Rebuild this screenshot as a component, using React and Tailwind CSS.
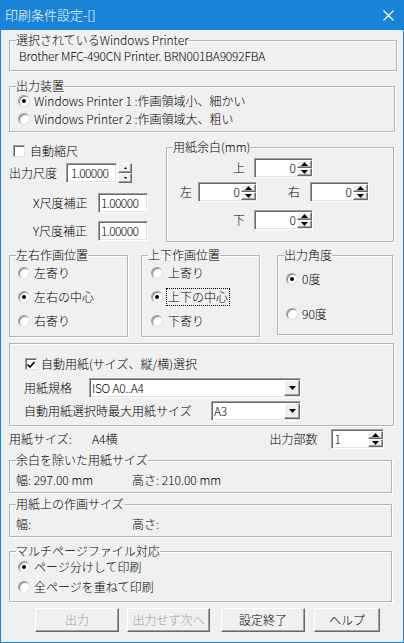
import React from 'react';

const sunken =
  'bg-white border border-t-[#a0a0a0] border-l-[#a0a0a0] border-b-white border-r-white shadow-[inset_1px_1px_0_#696969,inset_-1px_-1px_0_#e3e3e3]';
const raised =
  'bg-[#f0f0f0] border border-t-white border-l-white border-b-[#696969] border-r-[#696969] shadow-[inset_-1px_-1px_0_#a0a0a0]';

function Radio({ checked }) {
  return (
    <span className="w-[12px] h-[12px] shrink-0 rounded-full bg-white border border-[#a0a0a0] border-b-[#e3e3e3] border-r-[#e3e3e3] shadow-[inset_1px_1px_0_#8a8a8a] flex items-center justify-center">
      {checked && <span className="w-[4px] h-[4px] rounded-full bg-black" />}
    </span>
  );
}

function Check({ checked }) {
  return (
    <span className="w-[12px] h-[12px] shrink-0 bg-white border border-[#a0a0a0] border-b-[#e3e3e3] border-r-[#e3e3e3] shadow-[inset_1px_1px_0_#696969] flex items-center justify-center">
      {checked && (
        <svg width="8" height="7" viewBox="0 0 8 7">
          <path d="M0.5 3.5 L3 6 L7.5 1" fill="none" stroke="#000" strokeWidth="1.6" />
        </svg>
      )}
    </span>
  );
}

function Tri({ down }) {
  return (
    <svg width="7" height="4" viewBox="0 0 7 4">
      {down ? <path d="M0 0 H7 L3.5 4 Z" fill="#000" /> : <path d="M0 4 H7 L3.5 0 Z" fill="#000" />}
    </svg>
  );
}

// up/down buttons that sit inside a field
function MiniSpin() {
  return (
    <div className="flex flex-col w-[15px] h-[16px] shrink-0">
      <div className={`${raised} h-[8px] flex items-center justify-center`}>
        <Tri />
      </div>
      <div className={`${raised} h-[8px] flex items-center justify-center`}>
        <Tri down />
      </div>
    </div>
  );
}

function NumField({ value, className }) {
  return (
    <div className={`${sunken} h-[20px] flex items-center justify-end pl-[2px] ${className}`}>
      <span className="leading-[14px] pr-[1px]">{value}</span>
      <MiniSpin />
    </div>
  );
}

function Combo({ value, className }) {
  return (
    <div className={`${sunken} h-[20px] flex items-center ${className}`}>
      <span className="flex-1 pl-[2px] leading-[14px] tracking-[-0.3px]">{value}</span>
      <div className={`${raised} w-[16px] h-[16px] flex items-center justify-center`}>
        <Tri down />
      </div>
    </div>
  );
}

function Group({ title, className, children }) {
  return (
    <fieldset className={`border border-[#b4b4b4] shadow-[inset_1px_1px_0_#fff,1px_1px_0_#fff] ${className}`}>
      {title && <legend className="ml-[6px] leading-[14px]">{title}</legend>}
      {children}
    </fieldset>
  );
}

function Btn({ children, disabled, className }) {
  return (
    <button
      className={`${raised} h-[24px] flex items-center justify-center ${disabled ? 'text-[#a0a0a0]' : 'text-black'} ${className}`}
    >
      {children}
    </button>
  );
}

export default function App() {
  return (
    <div className="w-[404px] h-[643px] flex flex-col bg-[#f0f0f0] border-x border-b border-[#1883d7] text-[12px] font-light text-black font-['Noto_Sans_CJK_JP','Noto_Sans',sans-serif] overflow-hidden">
      {/* タイトルバー */}
      <div className="h-[30px] shrink-0 bg-[#1883d7] flex items-center justify-between pl-[4px] pr-[9px]">
        <span className="text-white text-[13px] leading-[16px]">印刷条件設定-[]</span>
        <svg width="11" height="11" viewBox="0 0 11 11">
          <path d="M0.5 0.5 L10.5 10.5 M10.5 0.5 L0.5 10.5" stroke="#fff" strokeWidth="1.1" />
        </svg>
      </div>

      <div className="flex flex-col pl-[8px]">
        {/* 選択プリンタ */}
        <Group title="選択されているWindows Printer" className="mt-[3px] w-[388px] h-[38px]">
          <div className="pl-[9px] pt-[2px] leading-[14px] tracking-[-0.2px]">Brother MFC-490CN Printer. BRN001BA9092FBA</div>
        </Group>

        {/* 出力装置 */}
        <Group title="出力装置" className="mt-[8px] w-[386px] h-[53px]">
          <div className="flex flex-col gap-[4px] pl-[8px] pt-[1px]">
            <div className="h-[14px] flex items-center gap-[4px]">
              <Radio checked />
              <span className="leading-[14px]">Windows Printer 1 :作画領域小、細かい</span>
            </div>
            <div className="h-[14px] flex items-center gap-[4px]">
              <Radio />
              <span className="leading-[14px]">Windows Printer 2 :作画領域大、粗い</span>
            </div>
          </div>
        </Group>

        {/* 尺度と余白 */}
        <div className="mt-[8px] flex items-start">
          <div className="w-[157px] flex flex-col">
            <div className="mt-[4px] h-[14px] flex items-center gap-[5px] pl-[4px]">
              <Check />
              <span className="leading-[14px]">自動縮尺</span>
            </div>
            <div className="mt-[5px] h-[20px] flex items-center">
              <span className="w-[57px] leading-[14px]">出力尺度</span>
              <div className={`${sunken} w-[51px] h-[20px] flex items-center pl-[4px] tracking-[-0.6px]`}>1.00000</div>
              <div className="ml-[1px] flex flex-col w-[14px] h-[20px]">
                <div className={`${raised} h-[10px] flex items-center justify-center`}>
                  <svg width="3" height="2" viewBox="0 0 3 2"><path d="M0 2 H3 L1.5 0 Z" fill="#000" /></svg>
                </div>
                <div className={`${raised} h-[10px] flex items-center justify-center`}>
                  <svg width="3" height="2" viewBox="0 0 3 2"><path d="M0 0 H3 L1.5 2 Z" fill="#000" /></svg>
                </div>
              </div>
            </div>
            <div className="mt-[10px] h-[20px] flex items-center pl-[24px]">
              <span className="w-[65px] leading-[14px]">X尺度補正</span>
              <div className={`${sunken} w-[50px] h-[20px] flex items-center pl-[2px] tracking-[-0.6px]`}>1.00000</div>
            </div>
            <div className="mt-[8px] h-[20px] flex items-center pl-[24px]">
              <span className="w-[65px] leading-[14px]">Y尺度補正</span>
              <div className={`${sunken} w-[50px] h-[20px] flex items-center pl-[2px] tracking-[-0.6px]`}>1.00000</div>
            </div>
          </div>

          <Group title="用紙余白(mm)" className="w-[228px] h-[102px]">
            <div className="flex flex-col">
              <div className="mt-[4px] h-[20px] flex items-center pl-[66px]">
                <span className="w-[21px] leading-[14px]">上</span>
                <NumField value="0" className="w-[59px]" />
              </div>
              <div className="mt-[4px] h-[20px] flex items-center pl-[13px]">
                <span className="w-[18px] leading-[14px]">左</span>
                <NumField value="0" className="w-[59px]" />
                <span className="ml-[31px] w-[22px] leading-[14px]">右</span>
                <NumField value="0" className="w-[59px]" />
              </div>
              <div className="mt-[8px] h-[20px] flex items-center pl-[66px]">
                <span className="w-[21px] leading-[14px]">下</span>
                <NumField value="0" className="w-[59px]" />
              </div>
            </div>
          </Group>
        </div>

        {/* 作画位置・出力角度 */}
        <div className="mt-[6px] flex items-start">
          <Group title="左右作画位置" className="w-[119px] h-[89px]">
            <div className="flex flex-col gap-[10px] mt-[4px] pl-[8px]">
              <div className="h-[14px] flex items-center gap-[4px]"><Radio /><span className="leading-[14px]">左寄り</span></div>
              <div className="h-[14px] flex items-center gap-[4px]"><Radio checked /><span className="leading-[14px]">左右の中心</span></div>
              <div className="h-[14px] flex items-center gap-[4px]"><Radio /><span className="leading-[14px]">右寄り</span></div>
            </div>
          </Group>
          <Group title="上下作画位置" className="ml-[13px] w-[119px] h-[89px]">
            <div className="flex flex-col gap-[10px] mt-[4px] pl-[9px]">
              <div className="h-[14px] flex items-center gap-[4px]"><Radio /><span className="leading-[14px] px-[1px]">上寄り</span></div>
              <div className="h-[14px] flex items-center gap-[3px]">
                <Radio checked />
                <span className="leading-[16px] px-[1px] border border-dotted border-black">上下の中心</span>
              </div>
              <div className="h-[14px] flex items-center gap-[4px]"><Radio /><span className="leading-[14px] px-[1px]">下寄り</span></div>
            </div>
          </Group>
          <Group title="出力角度" className="ml-[17px] w-[116px] h-[87px]">
            <div className="flex flex-col gap-[21px] mt-[10px] pl-[8px]">
              <div className="h-[14px] flex items-center gap-[4px]"><Radio checked /><span className="leading-[14px]">0度</span></div>
              <div className="h-[14px] flex items-center gap-[4px]"><Radio /><span className="leading-[14px]">90度</span></div>
            </div>
          </Group>
        </div>

        {/* 自動用紙 */}
        <Group className="mt-[6px] w-[385px] h-[83px]">
          <div className="flex flex-col">
            <div className="mt-[13px] h-[14px] flex items-center gap-[4px] pl-[15px]">
              <Check checked />
              <span className="leading-[14px]">自動用紙(サイズ、縦/横)選択</span>
            </div>
            <div className="mt-[7px] h-[20px] flex items-center pl-[14px]">
              <span className="w-[65px] leading-[14px]">用紙規格</span>
              <Combo value="ISO A0..A4" className="w-[212px]" />
            </div>
            <div className="mt-[3px] h-[20px] flex items-center pl-[14px]">
              <span className="w-[187px] leading-[14px]">自動用紙選択時最大用紙サイズ</span>
              <Combo value="A3" className="w-[90px]" />
            </div>
          </div>
        </Group>

        {/* 用紙サイズ・出力部数 */}
        <div className="mt-[3px] h-[20px] flex items-center">
          <span className="w-[83px] leading-[14px]">用紙サイズ:</span>
          <span className="leading-[14px]">A4横</span>
          <span className="ml-[152px] w-[62px] leading-[14px]">出力部数</span>
          <div className={`${sunken} w-[53px] h-[20px] flex items-center pl-[2px]`}>
            <span className="flex-1 leading-[14px]">1</span>
            <MiniSpin />
          </div>
        </div>

        {/* 余白を除いた用紙サイズ */}
        <Group title="余白を除いた用紙サイズ" className="mt-[4px] w-[383px] h-[40px]">
          <div className="mt-[6px] h-[14px] flex items-center pl-[6px]">
            <span className="w-[116px] leading-[14px]">幅: 297.00 mm</span>
            <span className="leading-[14px]">高さ: 210.00 mm</span>
          </div>
        </Group>

        {/* 用紙上の作画サイズ */}
        <Group title="用紙上の作画サイズ" className="mt-[4px] w-[383px] h-[40px]">
          <div className="mt-[6px] h-[14px] flex items-center pl-[6px]">
            <span className="w-[116px] leading-[14px]">幅:</span>
            <span className="leading-[14px]">高さ:</span>
          </div>
        </Group>

        {/* マルチページ */}
        <Group title="マルチページファイル対応" className="mt-[7px] w-[383px] h-[58px]">
          <div className="flex flex-col gap-[6px] mt-[2px] pl-[8px]">
            <div className="h-[14px] flex items-center gap-[4px]"><Radio checked /><span className="leading-[14px]">ページ分けして印刷</span></div>
            <div className="h-[14px] flex items-center gap-[4px]"><Radio /><span className="leading-[14px]">全ページを重ねて印刷</span></div>
          </div>
        </Group>

        {/* ボタン */}
        <div className="mt-[6px] flex items-center pl-[26px]">
          <Btn disabled className="w-[84px]">出力</Btn>
          <Btn disabled className="ml-[8px] w-[83px]">出力せず次へ</Btn>
          <Btn className="ml-[11px] w-[84px]">設定終了</Btn>
          <Btn className="ml-[9px] w-[66px]">ヘルプ</Btn>
        </div>
      </div>
    </div>
  );
}
